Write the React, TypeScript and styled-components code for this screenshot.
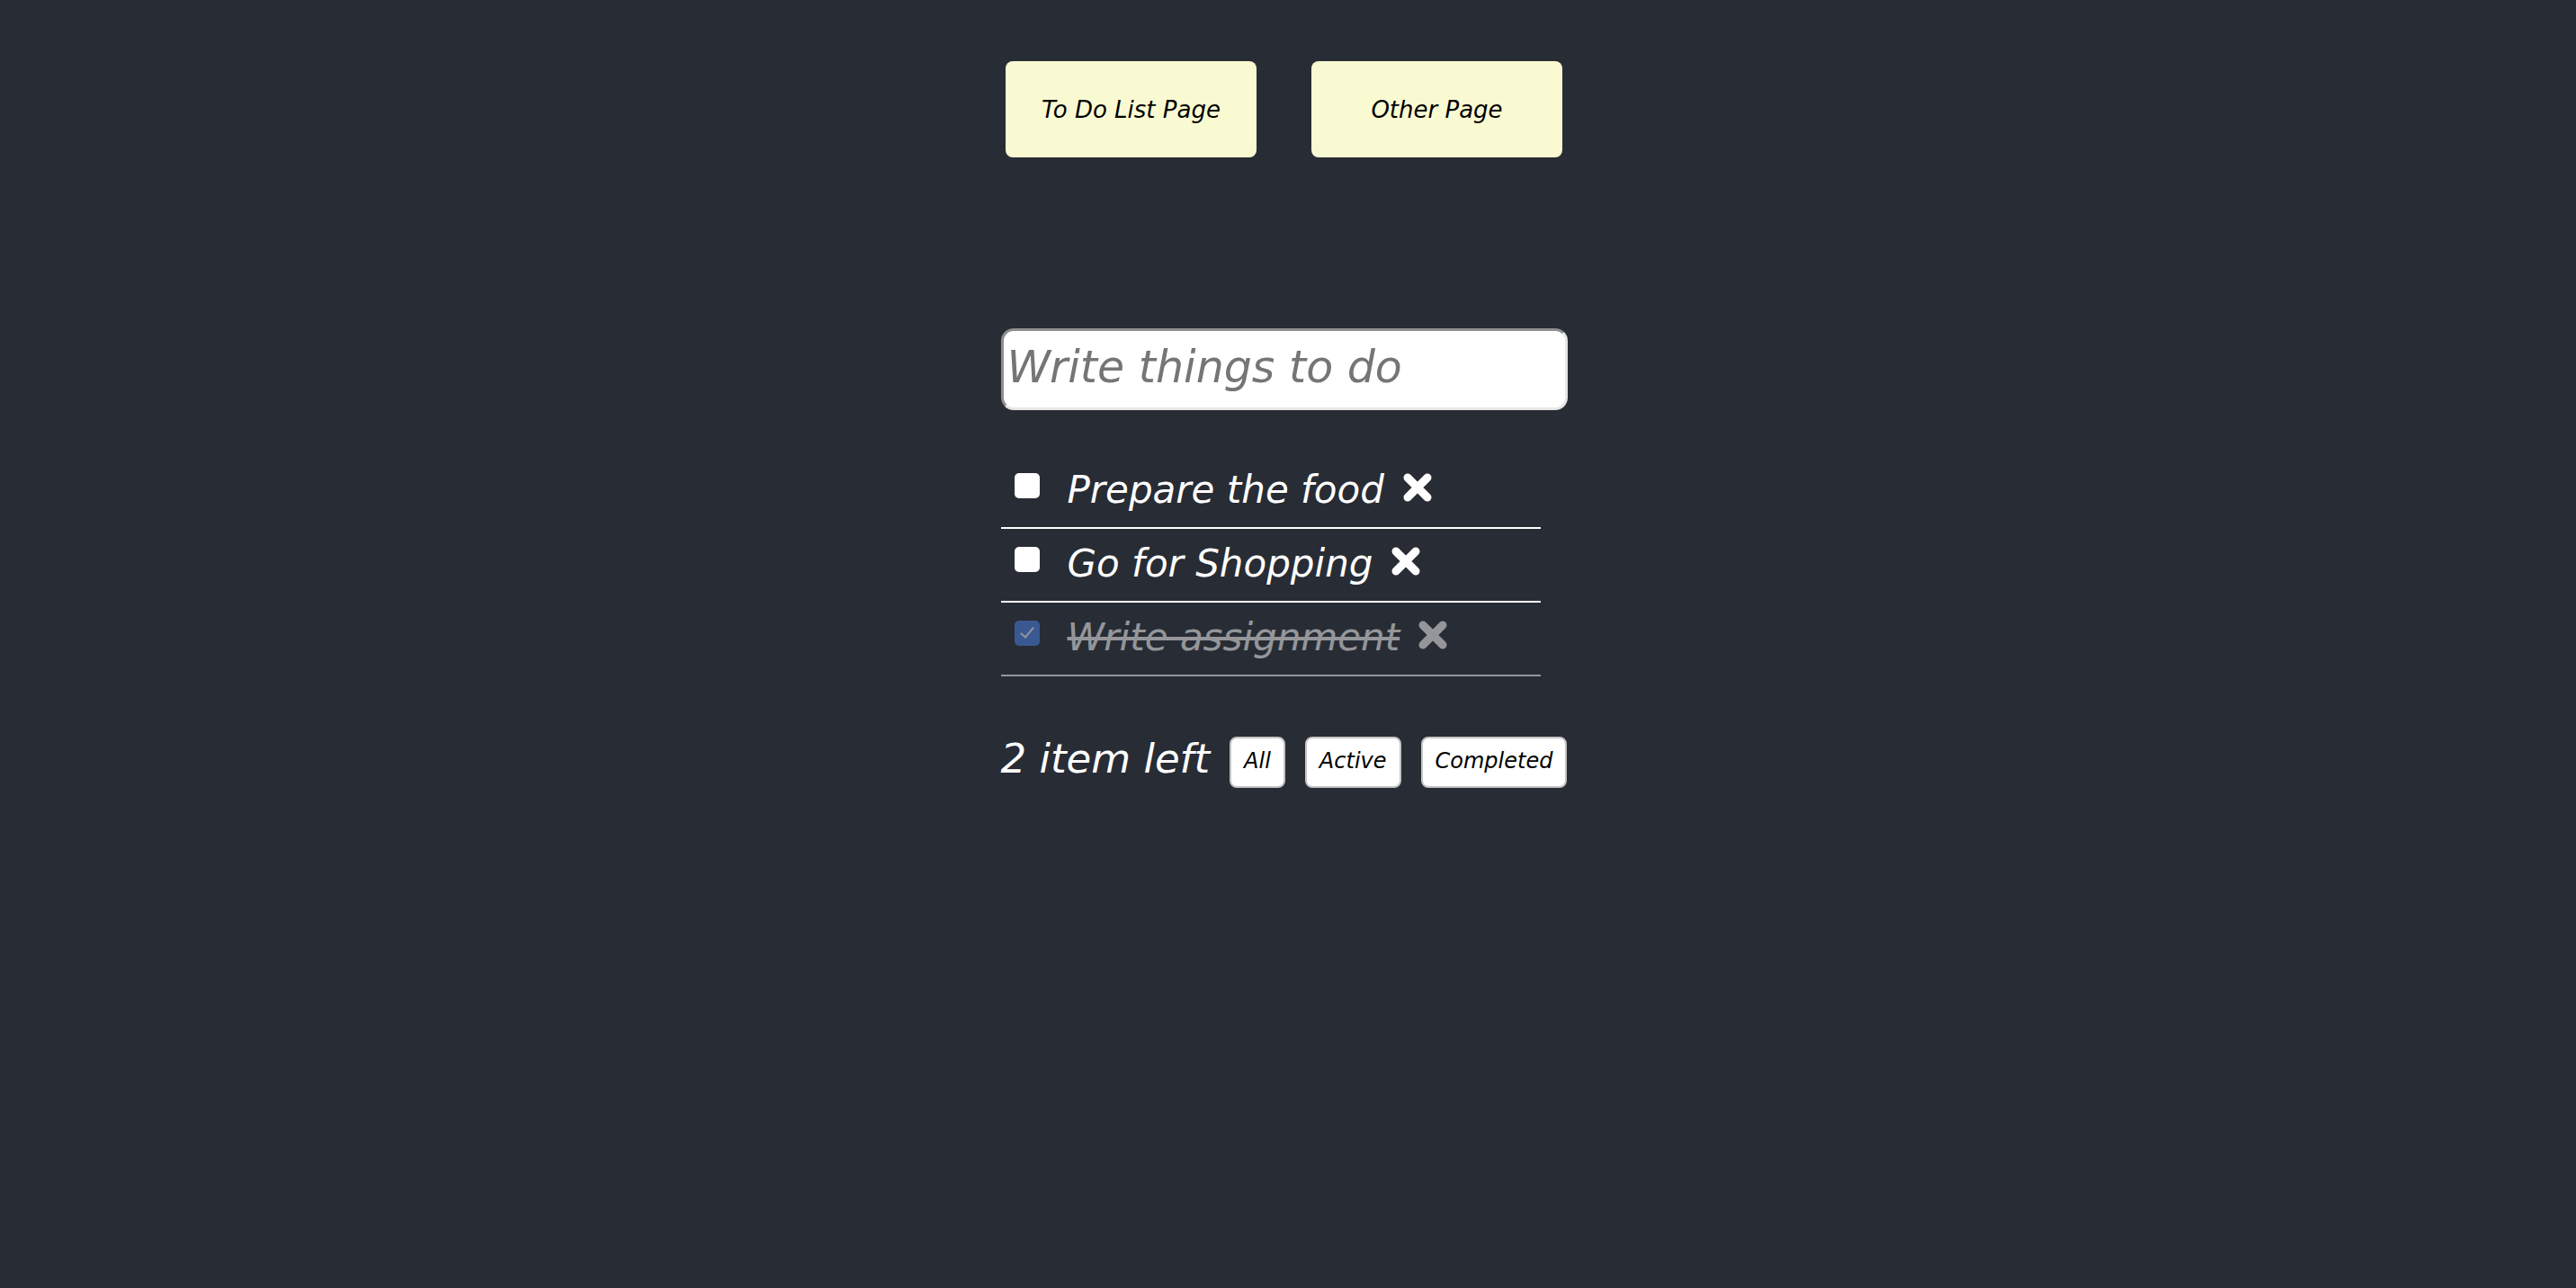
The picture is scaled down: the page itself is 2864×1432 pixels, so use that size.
import React, { useState } from "react";
import styled, { createGlobalStyle } from "styled-components";

const GlobalStyle = createGlobalStyle`
  html, body {
    margin: 0;
    padding: 0;
    background: #282c34;
    min-height: 100%;
  }
  body {
    font-family: "DejaVu Sans", "Liberation Sans", sans-serif;
    font-style: oblique;
  }
`;

const Page = styled.div`
  min-height: 1432px;
  background: #282c34;
  display: flex;
  justify-content: center;
  padding: 68px 9px 0 0;
  box-sizing: border-box;
`;

const Column = styled.div`
  width: 630px;
  display: flex;
  flex-direction: column;
`;

const Nav = styled.nav`
  display: flex;
  justify-content: center;
  gap: 61px;
`;

const NavButton = styled.button`
  width: 279px;
  height: 107px;
  background: #fafad2;
  border: none;
  border-radius: 8px;
  color: #000;
  font-family: "DejaVu Sans", sans-serif;
  font-style: oblique;
  font-size: 26px;
  padding-top: 2px;
  cursor: pointer;
`;

const TodoInput = styled.input`
  margin-top: 190px;
  width: 630px;
  height: 91px;
  box-sizing: border-box;
  background: #fff;
  border-style: solid;
  border-width: 3px;
  border-top-color: #8f8f8f;
  border-left-color: #8f8f8f;
  border-right-color: #e6e6e6;
  border-bottom-color: #e6e6e6;
  border-radius: 14px;
  padding: 0 0 4px 4px;
  font-family: "DejaVu Sans", sans-serif;
  font-style: oblique;
  font-size: 49px;
  color: #222;
  outline: none;
  &::placeholder {
    color: #757575;
  }
`;

const List = styled.ul`
  list-style: none;
  margin: 50px 0 0 0;
  padding: 0;
  width: 600px;
`;

const Row = styled.li<{ $done: boolean }>`
  display: flex;
  align-items: center;
  height: 82px;
  box-sizing: border-box;
  padding: 0 0 12px 15px;
  border-bottom: 2px solid #fff;
  opacity: ${(p) => (p.$done ? 0.5 : 1)};
`;

const Check = styled.input`
  appearance: none;
  -webkit-appearance: none;
  width: 28px;
  height: 28px;
  margin: 0 31px 0 0;
  border-radius: 5px;
  background: #fff;
  position: relative;
  flex-shrink: 0;
  cursor: pointer;
  &:checked {
    background: #4d86f2;
  }
  &:checked::after {
    content: "";
    position: absolute;
    left: 10px;
    top: 4px;
    width: 6px;
    height: 13px;
    border-right: 2px solid #fff;
    border-bottom: 2px solid #fff;
    transform: rotate(40deg);
  }
`;

const ItemText = styled.span<{ $done: boolean }>`
  color: #fff;
  font-size: 42px;
  padding-top: 8px;
  text-decoration: ${(p) => (p.$done ? "line-through" : "none")};
  text-decoration-thickness: 4px;
  white-space: nowrap;
`;

const Remove = styled.button`
  background: none;
  border: none;
  padding: 0;
  margin: 4px 0 0 20px;
  width: 34px;
  height: 34px;
  display: flex;
  cursor: pointer;
`;

const Footer = styled.div`
  margin-top: 67px;
  height: 57px;
  display: flex;
  align-items: center;
  gap: 22px;
`;

const Count = styled.span`
  color: #fff;
  font-size: 45px;
  margin-top: -8px;
  white-space: nowrap;
`;

const FilterButton = styled.button`
  height: 57px;
  padding: 0 14px 4px;
  background: #fff;
  border: 2px solid #c4c4c4;
  border-radius: 8px;
  color: #000;
  font-family: "DejaVu Sans", sans-serif;
  font-style: oblique;
  font-size: 24px;
  cursor: pointer;
`;

const XIcon = () => (
  <svg width="34" height="34" viewBox="0 0 34 34">
    <path
      d="M6 6 L28 28 M28 6 L6 28"
      stroke="#fff"
      strokeWidth="9"
      strokeLinecap="round"
      fill="none"
    />
  </svg>
);

type Todo = { id: number; text: string; done: boolean };

export default function App() {
  const [todos, setTodos] = useState<Todo[]>([
    { id: 1, text: "Prepare the food", done: false },
    { id: 2, text: "Go for Shopping", done: false },
    { id: 3, text: "Write assignment", done: true },
  ]);
  const left = todos.filter((t) => !t.done).length;

  return (
    <>
      <GlobalStyle />
      <Page>
        <Column>
          <Nav>
            <NavButton>To Do List Page</NavButton>
            <NavButton>Other Page</NavButton>
          </Nav>
          <TodoInput placeholder="Write things to do" />
          <List>
            {todos.map((t) => (
              <Row key={t.id} $done={t.done}>
                <Check
                  type="checkbox"
                  checked={t.done}
                  onChange={() =>
                    setTodos((all) =>
                      all.map((x) => (x.id === t.id ? { ...x, done: !x.done } : x))
                    )
                  }
                />
                <ItemText $done={t.done}>{t.text}</ItemText>
                <Remove aria-label="remove">
                  <XIcon />
                </Remove>
              </Row>
            ))}
          </List>
          <Footer>
            <Count>{left} item left</Count>
            <FilterButton>All</FilterButton>
            <FilterButton>Active</FilterButton>
            <FilterButton>Completed</FilterButton>
          </Footer>
        </Column>
      </Page>
    </>
  );
}
